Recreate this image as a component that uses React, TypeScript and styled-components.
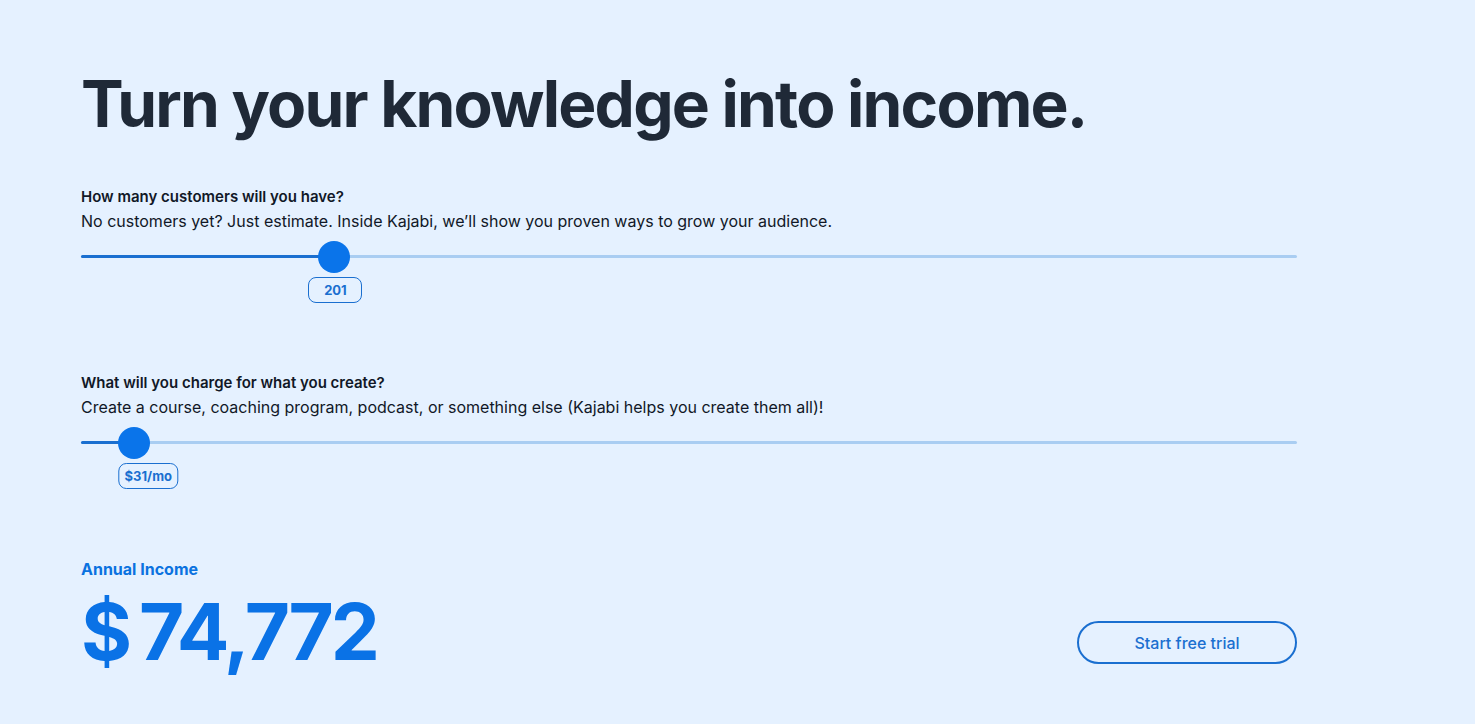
import React, { useState } from "react";
import styled, { createGlobalStyle } from "styled-components";

const Global = createGlobalStyle`
  html, body {
    margin: 0;
    background: #e5f1ff;
  }
  body {
    font-family: Inter, "Noto Sans", sans-serif;
    -webkit-font-smoothing: antialiased;
  }
`;

const Page = styled.main`
  min-height: 724px;
  box-sizing: border-box;
  padding: 64px 0 0 81px;
  background: #e5f1ff;
`;

const Inner = styled.div`
  width: 1216px;
`;

const Title = styled.h1`
  margin: 0;
  font-size: 64px;
  line-height: 80px;
  font-weight: 700;
  letter-spacing: -0.028em;
  color: #1f2937;
`;

const Question = styled.section<{ $top: number }>`
  margin-top: ${(p) => p.$top}px;
`;

const Label = styled.h2`
  margin: 0;
  font-size: 15px;
  line-height: 22px;
  font-weight: 600;
  color: #111827;
`;

const Hint = styled.p`
  margin: 2px 0 0;
  font-size: 16px;
  line-height: 22px;
  font-weight: 400;
  color: #111827;
`;

const Track = styled.div`
  position: relative;
  margin-top: 23px;
  height: 3px;
  background: #a9cdf2;
  border-radius: 2px;
`;

const Fill = styled.div`
  position: absolute;
  left: 0;
  top: 0;
  height: 3px;
  background: #1a6fd0;
  border-radius: 2px;
`;

const Thumb = styled.div`
  position: absolute;
  top: 50%;
  width: 32px;
  height: 32px;
  margin: -16px 0 0 -16px;
  border-radius: 50%;
  background: #0a74ea;
`;

const Badge = styled.div`
  position: absolute;
  top: 22px;
  transform: translateX(-50%);
  box-sizing: border-box;
  height: 26px;
  padding: 0 5px;
  min-width: 54px;
  display: flex;
  align-items: center;
  justify-content: center;
  border: 1px solid #1a6fd0;
  border-radius: 8px;
  font-size: 13px;
  font-weight: 700;
  color: #1a6fd0;
  white-space: nowrap;
`;

const Spacer = styled.div`
  height: 48px;
`;

const Result = styled.div`
  margin-top: 66px;
  display: flex;
  align-items: flex-end;
  justify-content: space-between;
`;

const IncomeLabel = styled.div`
  font-size: 16px;
  line-height: 22px;
  font-weight: 700;
  color: #0a72e0;
`;

const Income = styled.div`
  margin-top: 2px;
  font-size: 78px;
  line-height: 100px;
  font-weight: 700;
  color: #0a72e6;
  letter-spacing: -0.04em;
`;

const Dollar = styled.span`
  margin-right: 10px;
`;

const TrialButton = styled.button`
  margin-bottom: 18px;
  width: 220px;
  height: 43px;
  border: 2px solid #1a6fd0;
  border-radius: 22px;
  background: transparent;
  font-family: inherit;
  font-size: 16px;
  font-weight: 500;
  color: #1a6fd0;
  cursor: pointer;
`;

type SliderProps = {
  value: number;
  min: number;
  max: number;
  format: (v: number) => string;
};

function Slider({ value, min, max, format }: SliderProps) {
  const frac = (value - min) / (max - min);
  // thumb travels inside the track, inset by its radius
  const pos = `calc(16px + (100% - 32px) * ${frac})`;
  // the value tag runs on a slightly different scale than the thumb
  const tag = `calc(33px + (100% - 110px) * ${frac})`;
  return (
    <>
      <Track>
        <Fill style={{ width: pos }} />
        <Thumb style={{ left: pos }} />
        <Badge style={{ left: tag }}>{format(value)}</Badge>
      </Track>
      <Spacer />
    </>
  );
}

export default function App() {
  const [customers] = useState(201);
  const [price] = useState(31);
  const income = customers * price * 12;

  return (
    <>
      <Global />
      <Page>
        <Inner>
          <Title>Turn your knowledge into income.</Title>

          <Question $top={42}>
            <Label>How many customers will you have?</Label>
            <Hint>
              No customers yet? Just estimate. Inside Kajabi, we’ll show you proven ways to grow
              your audience.
            </Hint>
            <Slider value={customers} min={1} max={1000} format={(v) => String(v)} />
          </Question>

          <Question $top={66}>
            <Label>What will you charge for what you create?</Label>
            <Hint>
              Create a course, coaching program, podcast, or something else (Kajabi helps you create
              them all)!
            </Hint>
            <Slider value={price} min={0} max={1000} format={(v) => `$${v}/mo`} />
          </Question>

          <Result>
            <div>
              <IncomeLabel>Annual Income</IncomeLabel>
              <Income>
                <Dollar>$</Dollar>
                {income.toLocaleString("en-US")}
              </Income>
            </div>
            <TrialButton>Start free trial</TrialButton>
          </Result>
        </Inner>
      </Page>
    </>
  );
}
